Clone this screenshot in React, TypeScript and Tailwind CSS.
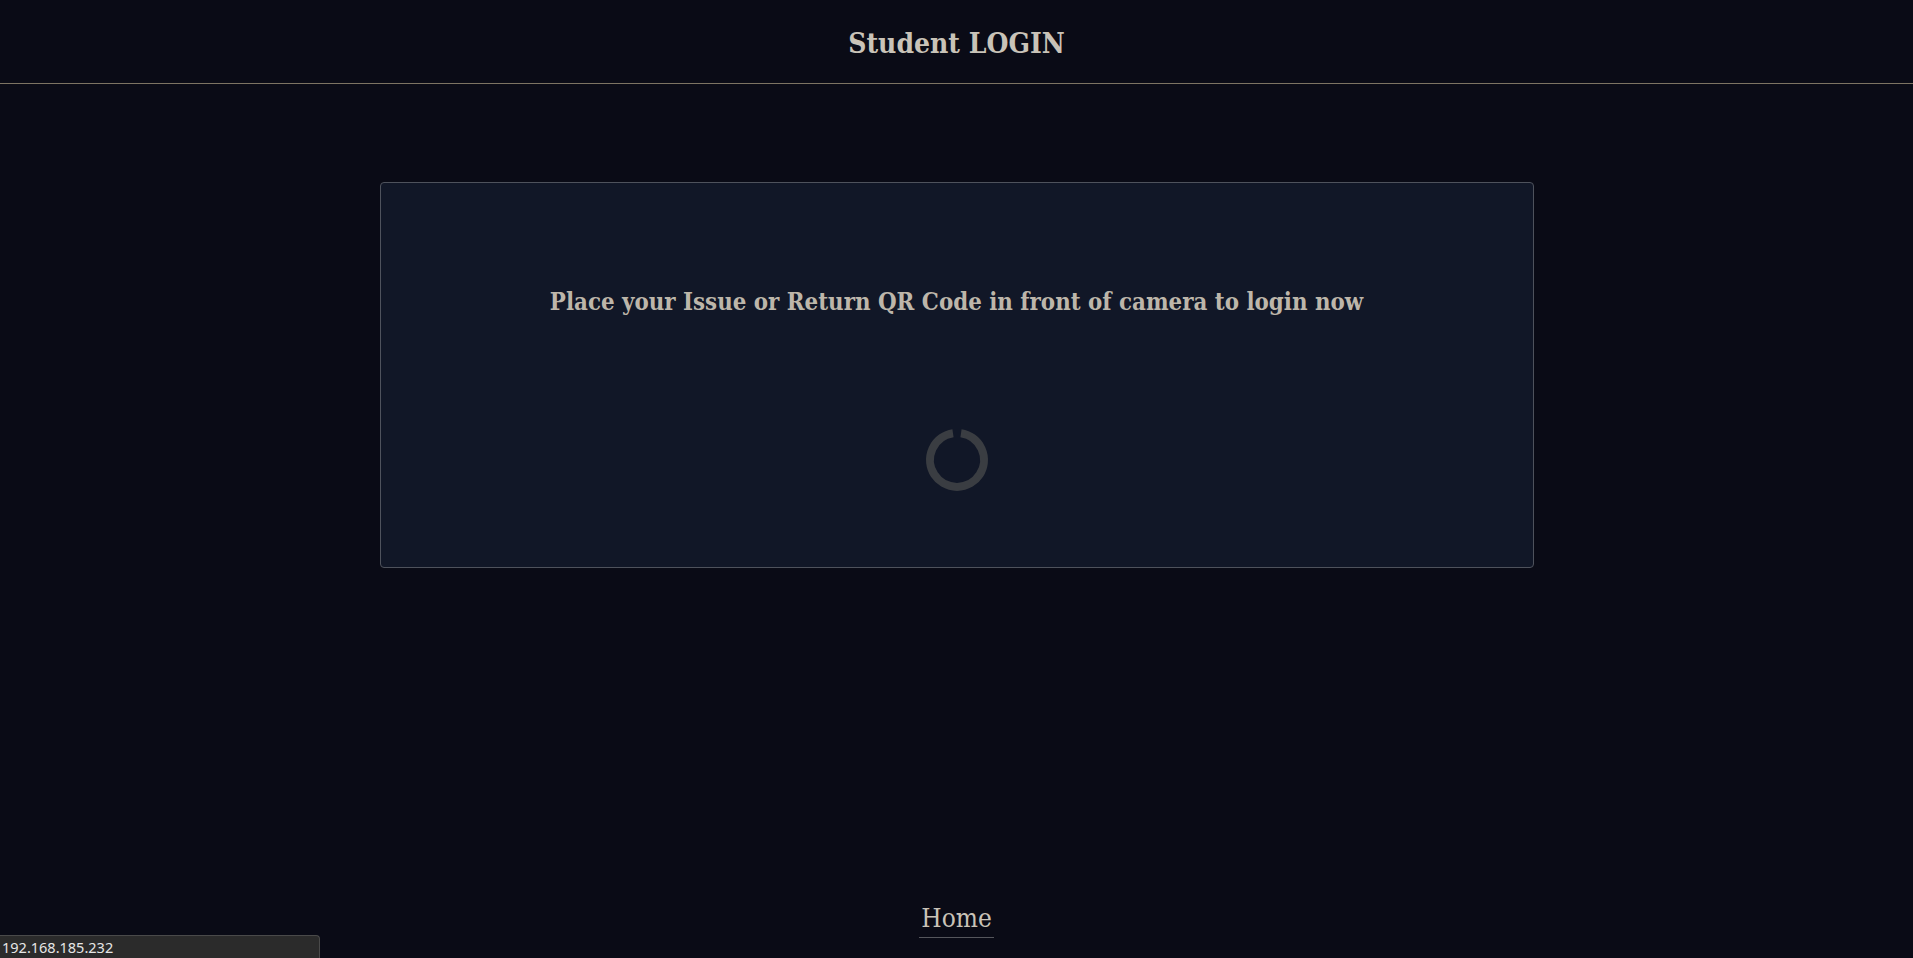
export default function App() {
  return (
    <div
      className="relative flex h-[958px] flex-col bg-[#0a0b16] text-[#c9c3b8]"
      style={{ fontFamily: '"DejaVu Serif", "Liberation Serif", serif' }}
    >
      <header className="flex h-[84px] items-center justify-center border-b border-[#7d7463] pt-[4px]">
        <h1 className="text-[28px] font-bold [font-stretch:condensed]">Student LOGIN</h1>
      </header>

      <main className="mt-[98px] flex justify-center">
        <div className="flex h-[386px] w-[1154px] flex-col items-center rounded-[4px] border border-[#4e525c] bg-[#111727]">
          <p className="mt-[102px] text-[23.8px] font-bold text-[#bdb6aa] [font-stretch:condensed]">
            Place your Issue or Return QR Code in front of camera to login now
          </p>
          <svg className="mt-[106px]" width="66" height="66" viewBox="0 0 66 66">
            <path
              d="M 29 6.2 A 27 27 0 1 0 37 6.2"
              fill="none"
              stroke="#3a3d42"
              strokeWidth="8"
            />
          </svg>
        </div>
      </main>

      <footer className="mt-auto flex justify-center pb-[20px]">
        <a className="border-b border-[#55565c] px-[2px] pb-[1px] text-[26px] leading-[36px] [font-stretch:condensed]">Home</a>
      </footer>

      <div
        className="absolute bottom-0 left-0 h-[23px] w-[320px] rounded-tr-[4px] border-t border-r border-[#4a4a4a] bg-[#2b2b2b] pl-[2px] text-[14.5px] leading-[23px] text-[#e6e6e6]"
        style={{ fontFamily: '"Noto Sans", "Open Sans", sans-serif' }}
      >
        192.168.185.232
      </div>
    </div>
  );
}
